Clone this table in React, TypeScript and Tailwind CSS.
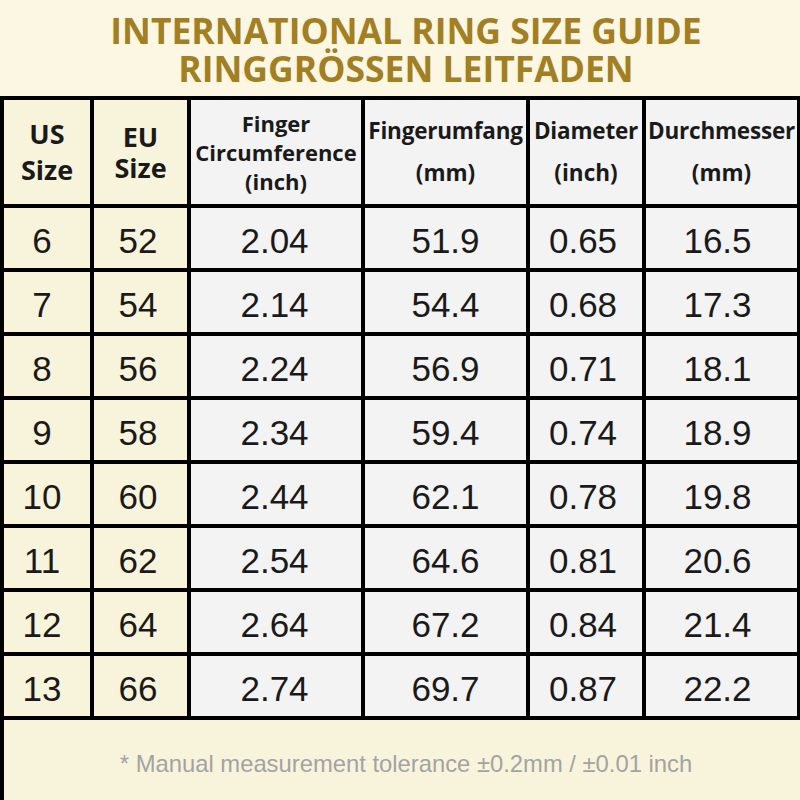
const rows = [
  ['6', '52', '2.04', '51.9', '0.65', '16.5'],
  ['7', '54', '2.14', '54.4', '0.68', '17.3'],
  ['8', '56', '2.24', '56.9', '0.71', '18.1'],
  ['9', '58', '2.34', '59.4', '0.74', '18.9'],
  ['10', '60', '2.44', '62.1', '0.78', '19.8'],
  ['11', '62', '2.54', '64.6', '0.81', '20.6'],
  ['12', '64', '2.64', '67.2', '0.84', '21.4'],
  ['13', '66', '2.74', '69.7', '0.87', '22.2'],
];

// per-column nudge, the source image isn't perfectly centred
const colPad = ['pr-[10px]', 'pr-[5px]', 'pr-[3px]', 'pr-0', 'pr-[6px]', 'pr-[8px]'];

const headFont = { fontFamily: '"Open Sans", "Noto Sans", sans-serif' };
const numFont = { fontFamily: '"Liberation Sans", Arial, sans-serif' };

export default function App() {
  return (
    <div className="w-[800px] h-[800px] overflow-hidden bg-[#fbf7e2]">
      <div
        className="h-[96px] flex flex-col items-center justify-center pt-[2px] pl-[12px] text-[#a17f22] font-bold text-[35.5px] leading-[38px]"
        style={headFont}
      >
        <div>INTERNATIONAL RING SIZE GUIDE</div>
        <div>RINGGRÖSSEN LEITFADEN</div>
      </div>

      <div className="grid grid-cols-[86px_93px_170px_161px_112px_151px] grid-rows-[104px_repeat(8,60px)] gap-[4px] bg-black pt-[4px] pb-[4px] pl-[4px] pr-[3px]">
        <HeadCell cream>
          <div className="text-[27px] leading-[36px]">US</div>
          <div className="text-[27px] leading-[36px]">Size</div>
        </HeadCell>
        <HeadCell cream>
          <div className="text-[27px] leading-[31px]">EU</div>
          <div className="text-[27px] leading-[31px]">Size</div>
        </HeadCell>
        <HeadCell>
          <div className="text-[22px] leading-[29px]">Finger</div>
          <div className="text-[22px] leading-[29px]">Circumference</div>
          <div className="text-[22px] leading-[29px]">(inch)</div>
        </HeadCell>
        <HeadCell>
          <div className="text-[22.5px] leading-[42px] tracking-[-0.2px]">Fingerumfang</div>
          <div className="text-[22.5px] leading-[42px]">(mm)</div>
        </HeadCell>
        <HeadCell>
          <div className="text-[22.5px] leading-[42px] tracking-[-0.2px]">Diameter</div>
          <div className="text-[22.5px] leading-[42px]">(inch)</div>
        </HeadCell>
        <HeadCell>
          <div className="text-[22.5px] leading-[42px] tracking-[-0.2px]">Durchmesser</div>
          <div className="text-[22.5px] leading-[42px]">(mm)</div>
        </HeadCell>

        {rows.map((r) =>
          r.map((v, i) => (
            <div
              key={r[0] + '-' + i}
              className={
                'flex items-center justify-center pt-[6px] text-[35px] text-[#1a1a1a] ' +
                colPad[i] +
                ' ' +
                (i < 2 ? 'bg-[#f8f4dc]' : 'bg-[#f3f3f3]')
              }
              style={numFont}
            >
              {v}
            </div>
          ))
        )}
      </div>

      <div className="h-[80px] border-l-[4px] border-black bg-[#f8f4dc] flex items-center justify-center pt-[8px] pl-[8px]">
        <span className="text-[23.8px] text-[#a3a3a3]" style={numFont}>
          * Manual measurement tolerance ±0.2mm / ±0.01 inch
        </span>
      </div>
    </div>
  );
}

function HeadCell({ children, cream }: { children: React.ReactNode; cream?: boolean }) {
  return (
    <div
      className={
        'flex flex-col items-center justify-center text-center font-bold text-[#1a1a1a] whitespace-nowrap ' +
        (cream ? 'bg-[#f8f4dc]' : 'bg-[#f3f3f3]')
      }
      style={headFont}
    >
      {children}
    </div>
  );
}
